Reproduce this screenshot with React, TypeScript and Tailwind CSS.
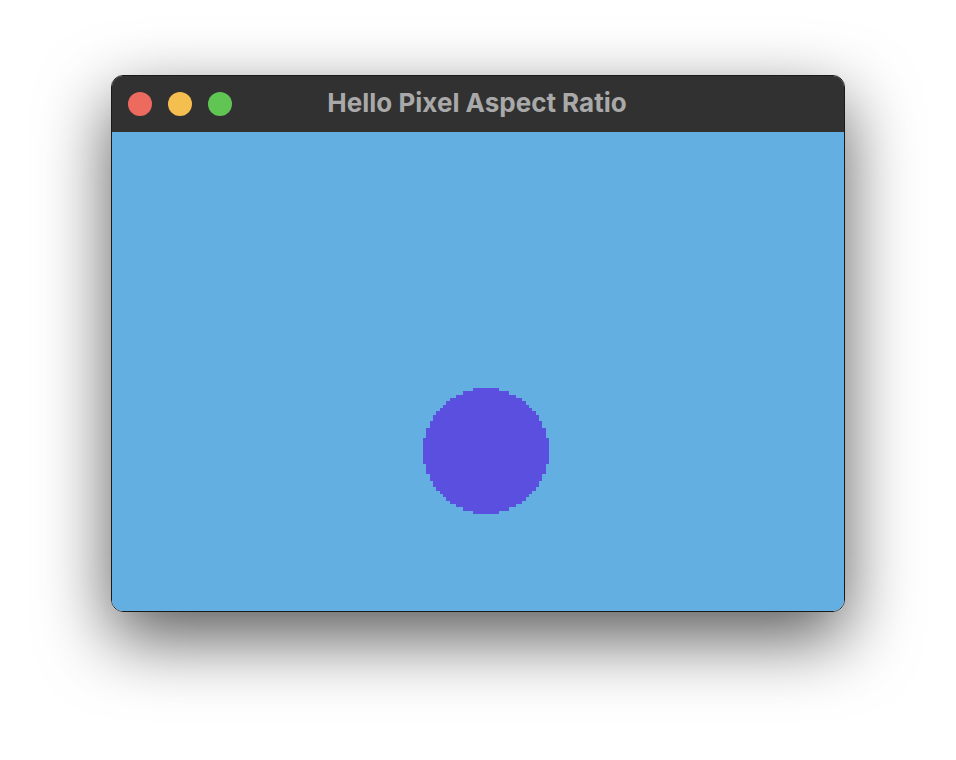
import React from "react";

function PixelCircle() {
  const n = 38;
  const r = n / 2;
  const rows: React.ReactNode[] = [];
  for (let j = 0; j < n; j++) {
    const y = j + 0.5 - r;
    const hw = Math.sqrt(Math.max(0, r * r - y * y));
    const x0 = Math.round(r - hw);
    const x1 = Math.round(r + hw);
    if (x1 > x0) rows.push(<rect key={j} x={x0} y={j} width={x1 - x0} height={1} fill="#5a4fdf" />);
  }
  return (
    <svg width={126} height={126} viewBox={`0 0 ${n} ${n}`} shapeRendering="crispEdges" className="block">
      {rows}
    </svg>
  );
}

export default function App() {
  return (
    <div className="w-[956px] h-[760px] bg-white pt-[75px] pl-[111px] overflow-hidden" style={{ fontFamily: "Inter, 'Liberation Sans', sans-serif" }}>
      <div className="w-[734px] h-[537px] rounded-[12px] border border-[#1a1a1a] overflow-hidden flex flex-col shadow-[0_26px_70px_rgba(0,0,0,0.65)]">
        <div className="h-[56px] bg-[#313131] flex items-center relative shrink-0">
          <div className="flex items-center gap-[16px] pl-[16px]">
            <div className="w-[24px] h-[24px] rounded-full bg-[#ed6a5e]" />
            <div className="w-[24px] h-[24px] rounded-full bg-[#f5bf4f]" />
            <div className="w-[24px] h-[24px] rounded-full bg-[#61c554]" />
          </div>
          <div className="absolute inset-0 flex items-center justify-center pr-[2px] pb-[2px] text-[26px] leading-none font-bold text-[#a9a9a9] pointer-events-none">
            Hello Pixel Aspect Ratio
          </div>
        </div>
        <div className="flex-1 bg-[#64afe2] pl-[311px] pt-[256px]">
          <PixelCircle />
        </div>
      </div>
    </div>
  );
}
